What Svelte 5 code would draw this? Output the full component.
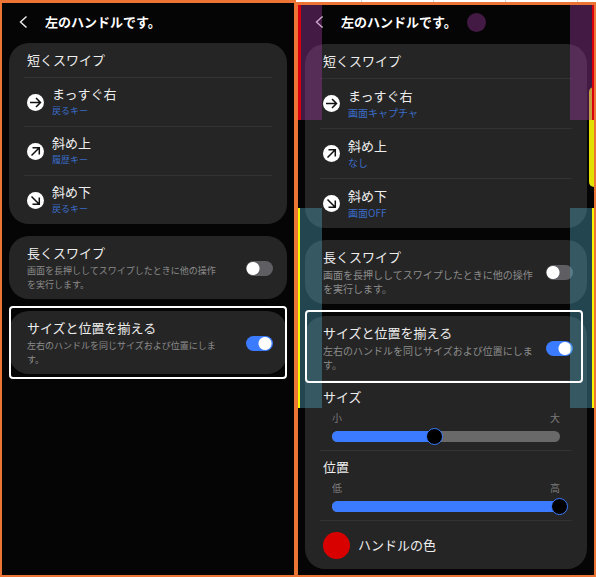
<script>
  const arrows = {
    right: 'M3 8.5h10.5M9 4l4.5 4.5L9 13',
    up: 'M4.5 12.5l7.5-7.5M5.5 4.8h6.8v6.8',
    down: 'M4.5 4.5l7.5 7.5M12.3 5.4v6.8H5.5'
  };

  let screens = $state([
    {
      id: 'before',
      swipes: [
        { arrow: 'right', name: 'まっすぐ右', action: '戻るキー' },
        { arrow: 'up', name: '斜め上', action: '履歴キー' },
        { arrow: 'down', name: '斜め下', action: '戻るキー' }
      ],
      longSwipe: false,
      match: true,
      sliders: [],
      handles: false
    },
    {
      id: 'after',
      swipes: [
        { arrow: 'right', name: 'まっすぐ右', action: '画面キャプチャ' },
        { arrow: 'up', name: '斜め上', action: 'なし' },
        { arrow: 'down', name: '斜め下', action: '画面OFF' }
      ],
      longSwipe: false,
      match: true,
      sliders: [
        { name: 'サイズ', low: '小', high: '大', value: 45 },
        { name: '位置', low: '低', high: '高', value: 100 }
      ],
      handles: true
    }
  ]);
</script>

<main>
  {#each screens as screen}
    <section class="screen {screen.id}">
      <header>
        <button class="back" aria-label="戻る">
          <svg width="9" height="14" viewBox="0 0 9 14">
            <path d="M7.5 1.5L1.5 7l6 5.5" fill="none" stroke="#eee" stroke-width="1.4" />
          </svg>
        </button>
        <h1>左のハンドルです。</h1>
        {#if screen.handles}
          <span class="dot"></span>
        {/if}
      </header>

      <div class="card">
        <h2>短くスワイプ</h2>
        {#each screen.swipes as swipe}
          <button class="row">
            <svg class="arrow" width="17" height="17" viewBox="0 0 17 17">
              <circle cx="8.5" cy="8.5" r="8.5" fill="#fff" />
              <path d={arrows[swipe.arrow]} fill="none" stroke="#111" stroke-width="1.5" />
            </svg>
            <span class="labels">
              <span class="name">{swipe.name}</span>
              <span class="action">{swipe.action}</span>
            </span>
          </button>
        {/each}
      </div>

      <div class="card">
        <label class="toggle">
          <span class="labels">
            <span class="name">長くスワイプ</span>
            <span class="desc">画面を長押ししてスワイプしたときに他の操作を実行します。</span>
          </span>
          <input type="checkbox" bind:checked={screen.longSwipe} />
        </label>
      </div>

      <div class="card marked">
        <label class="toggle">
          <span class="labels">
            <span class="name">サイズと位置を揃える</span>
            <span class="desc">左右のハンドルを同じサイズおよび位置にします。</span>
          </span>
          <input type="checkbox" bind:checked={screen.match} />
          <span class="frame"></span>
        </label>

        {#each screen.sliders as slider, i}
          <div class="slider">
            <label class="name" for="slider-{i}">{slider.name}</label>
            <div class="ends">
              <span>{slider.low}</span>
              <span>{slider.high}</span>
            </div>
            <div class="range">
              <div class="track">
                <div class="fill" style="width: {slider.value}%"></div>
              </div>
              <input id="slider-{i}" type="range" min="0" max="100" bind:value={slider.value} />
            </div>
          </div>
        {/each}

        {#if screen.handles}
          <button class="row color">
            <span class="swatch"></span>
            <span class="name">ハンドルの色</span>
          </button>
        {/if}
      </div>

      {#if screen.handles}
        <span class="edge"></span>
        <span class="strip red left"></span>
        <span class="strip red right"></span>
        <span class="strip yellow left"></span>
        <span class="strip yellow right"></span>
      {/if}
    </section>
  {/each}
</main>

<style>
  :global(body) {
    margin: 0;
    background: #fff;
  }

  main {
    display: grid;
    grid-template-columns: 296fr 300fr;
    font-family: "Noto Sans CJK JP", sans-serif;
    color: #eee;
    /* sheet columns that show above the second screen */
    background: repeating-linear-gradient(90deg, #fff 0 71px, #d4d4d4 71px 72px) 2px 0;
  }

  .screen {
    --small: 9px;
    --row: 49px;
    --end: 7px;
    --gap: 24px;
    position: relative;
    box-sizing: border-box;
    padding: 0 7px 6px;
    border: 2px solid #ec7434;
    border-top-width: 3px;
    background: #050505;
  }

  .after {
    --small: 10px;
    --row: 50px;
    --end: 8px;
    --gap: 10px;
    margin-top: 2px;
  }

  header {
    display: flex;
    align-items: center;
    box-sizing: border-box;
    height: 40px;
    padding: 0 0 3px 10px;
  }

  .after header {
    height: 39px;
    padding-bottom: 5px;
  }

  h1, h2 {
    margin: 0;
    font-size: 13px;
    line-height: 18px;
  }

  h1 {
    color: #fff;
    font-weight: 700;
  }

  h2 {
    padding: 8px 18px;
    font-weight: 400;
  }

  button {
    padding: 0;
    border: 0;
    background: none;
    color: inherit;
    font: inherit;
    text-align: left;
  }

  .back {
    display: flex;
    width: 26px;
  }

  .dot {
    width: 19px;
    height: 19px;
    margin-left: 10px;
    border-radius: 50%;
    background: #421a43;
  }

  .card {
    margin-bottom: 12px;
    border-radius: 20px;
    background: #252525;
  }

  .card:last-of-type {
    margin-bottom: 0;
  }

  .row {
    display: flex;
    align-items: center;
    gap: 8px;
    box-sizing: border-box;
    width: calc(100% - 30px);
    height: var(--row);
    margin: 0 15px;
    padding: 0 3px;
    border-top: 1px solid #323232;
  }

  .labels {
    display: flex;
    flex: 1;
    flex-direction: column;
  }

  .name {
    font-size: 13px;
    line-height: 18px;
  }

  .action {
    color: #3a6cc8;
    font-size: var(--small);
    line-height: 16px;
  }

  .toggle {
    position: relative;
    display: flex;
    align-items: center;
    gap: var(--gap);
    padding: 8px 14px var(--end) 18px;
  }

  .desc {
    margin-top: 2px;
    color: #8c8c8c;
    font-size: var(--small);
    line-height: 14px;
  }

  input[type="checkbox"] {
    appearance: none;
    width: 27px;
    height: 15px;
    margin: 0;
    border-radius: 8px;
    background: radial-gradient(circle at 7px 50%, #fff 6px, #5f5f63 7px);
  }

  input[type="checkbox"]:checked {
    background: radial-gradient(circle at 19px 50%, #fff 6px, #3b7bff 7px);
  }

  .frame {
    position: absolute;
    inset: -5px 0;
    border: 2px solid #fff;
    border-radius: 4px;
    z-index: 2;
  }

  .after .frame {
    inset: -6px 4px -3px 0;
  }

  .slider {
    box-sizing: border-box;
    margin: 0 15px;
    padding: 7px 3px 5px;
    border-top: 1px solid #323232;
  }

  .slider .name {
    display: block;
  }

  .ends {
    display: flex;
    justify-content: space-between;
    margin: 5px 9px 3px;
    color: #7c7c7c;
    font-size: var(--small);
    line-height: 14px;
  }

  .range {
    display: grid;
    align-items: center;
    height: 17px;
  }

  .track, .range input {
    grid-area: 1 / 1;
  }

  .track {
    height: 11px;
    margin: 0 9px;
    border-radius: 6px;
    background: #696969;
  }

  .fill {
    height: 100%;
    border-radius: 6px;
    background: #3b7bff;
  }

  .range input {
    appearance: none;
    height: 17px;
    margin: 0 1px;
    background: none;
  }

  .range input::-webkit-slider-thumb {
    appearance: none;
    box-sizing: border-box;
    width: 17px;
    height: 17px;
    border: 1px solid #3b7bff;
    border-radius: 50%;
    background: #000;
  }

  .color {
    height: 49px;
  }

  .swatch {
    width: 27px;
    height: 27px;
    border-radius: 50%;
    background: #d90000;
  }

  .strip, .edge {
    position: absolute;
    box-sizing: border-box;
    pointer-events: none;
  }

  .strip {
    width: 24px;
  }

  .left {
    left: 0;
  }

  .right {
    right: 0;
  }

  .red {
    top: 0;
    height: 115px;
    background: rgba(157, 57, 160, 0.4);
  }

  .yellow {
    top: 203px;
    height: 200px;
    background: rgba(77, 165, 190, 0.4);
  }

  .red.left {
    border-left: 3px solid #d8000c;
  }

  .red.right {
    border-right: 2px solid #d8000c;
  }

  .yellow.left {
    border-left: 2px solid #f4f400;
  }

  .yellow.right {
    border-right: 2px solid #f4f400;
  }

  .edge {
    top: 82px;
    right: 0;
    width: 5px;
    height: 100px;
    border-radius: 5px 0 0 5px;
    background: #e2e000;
  }
</style>
